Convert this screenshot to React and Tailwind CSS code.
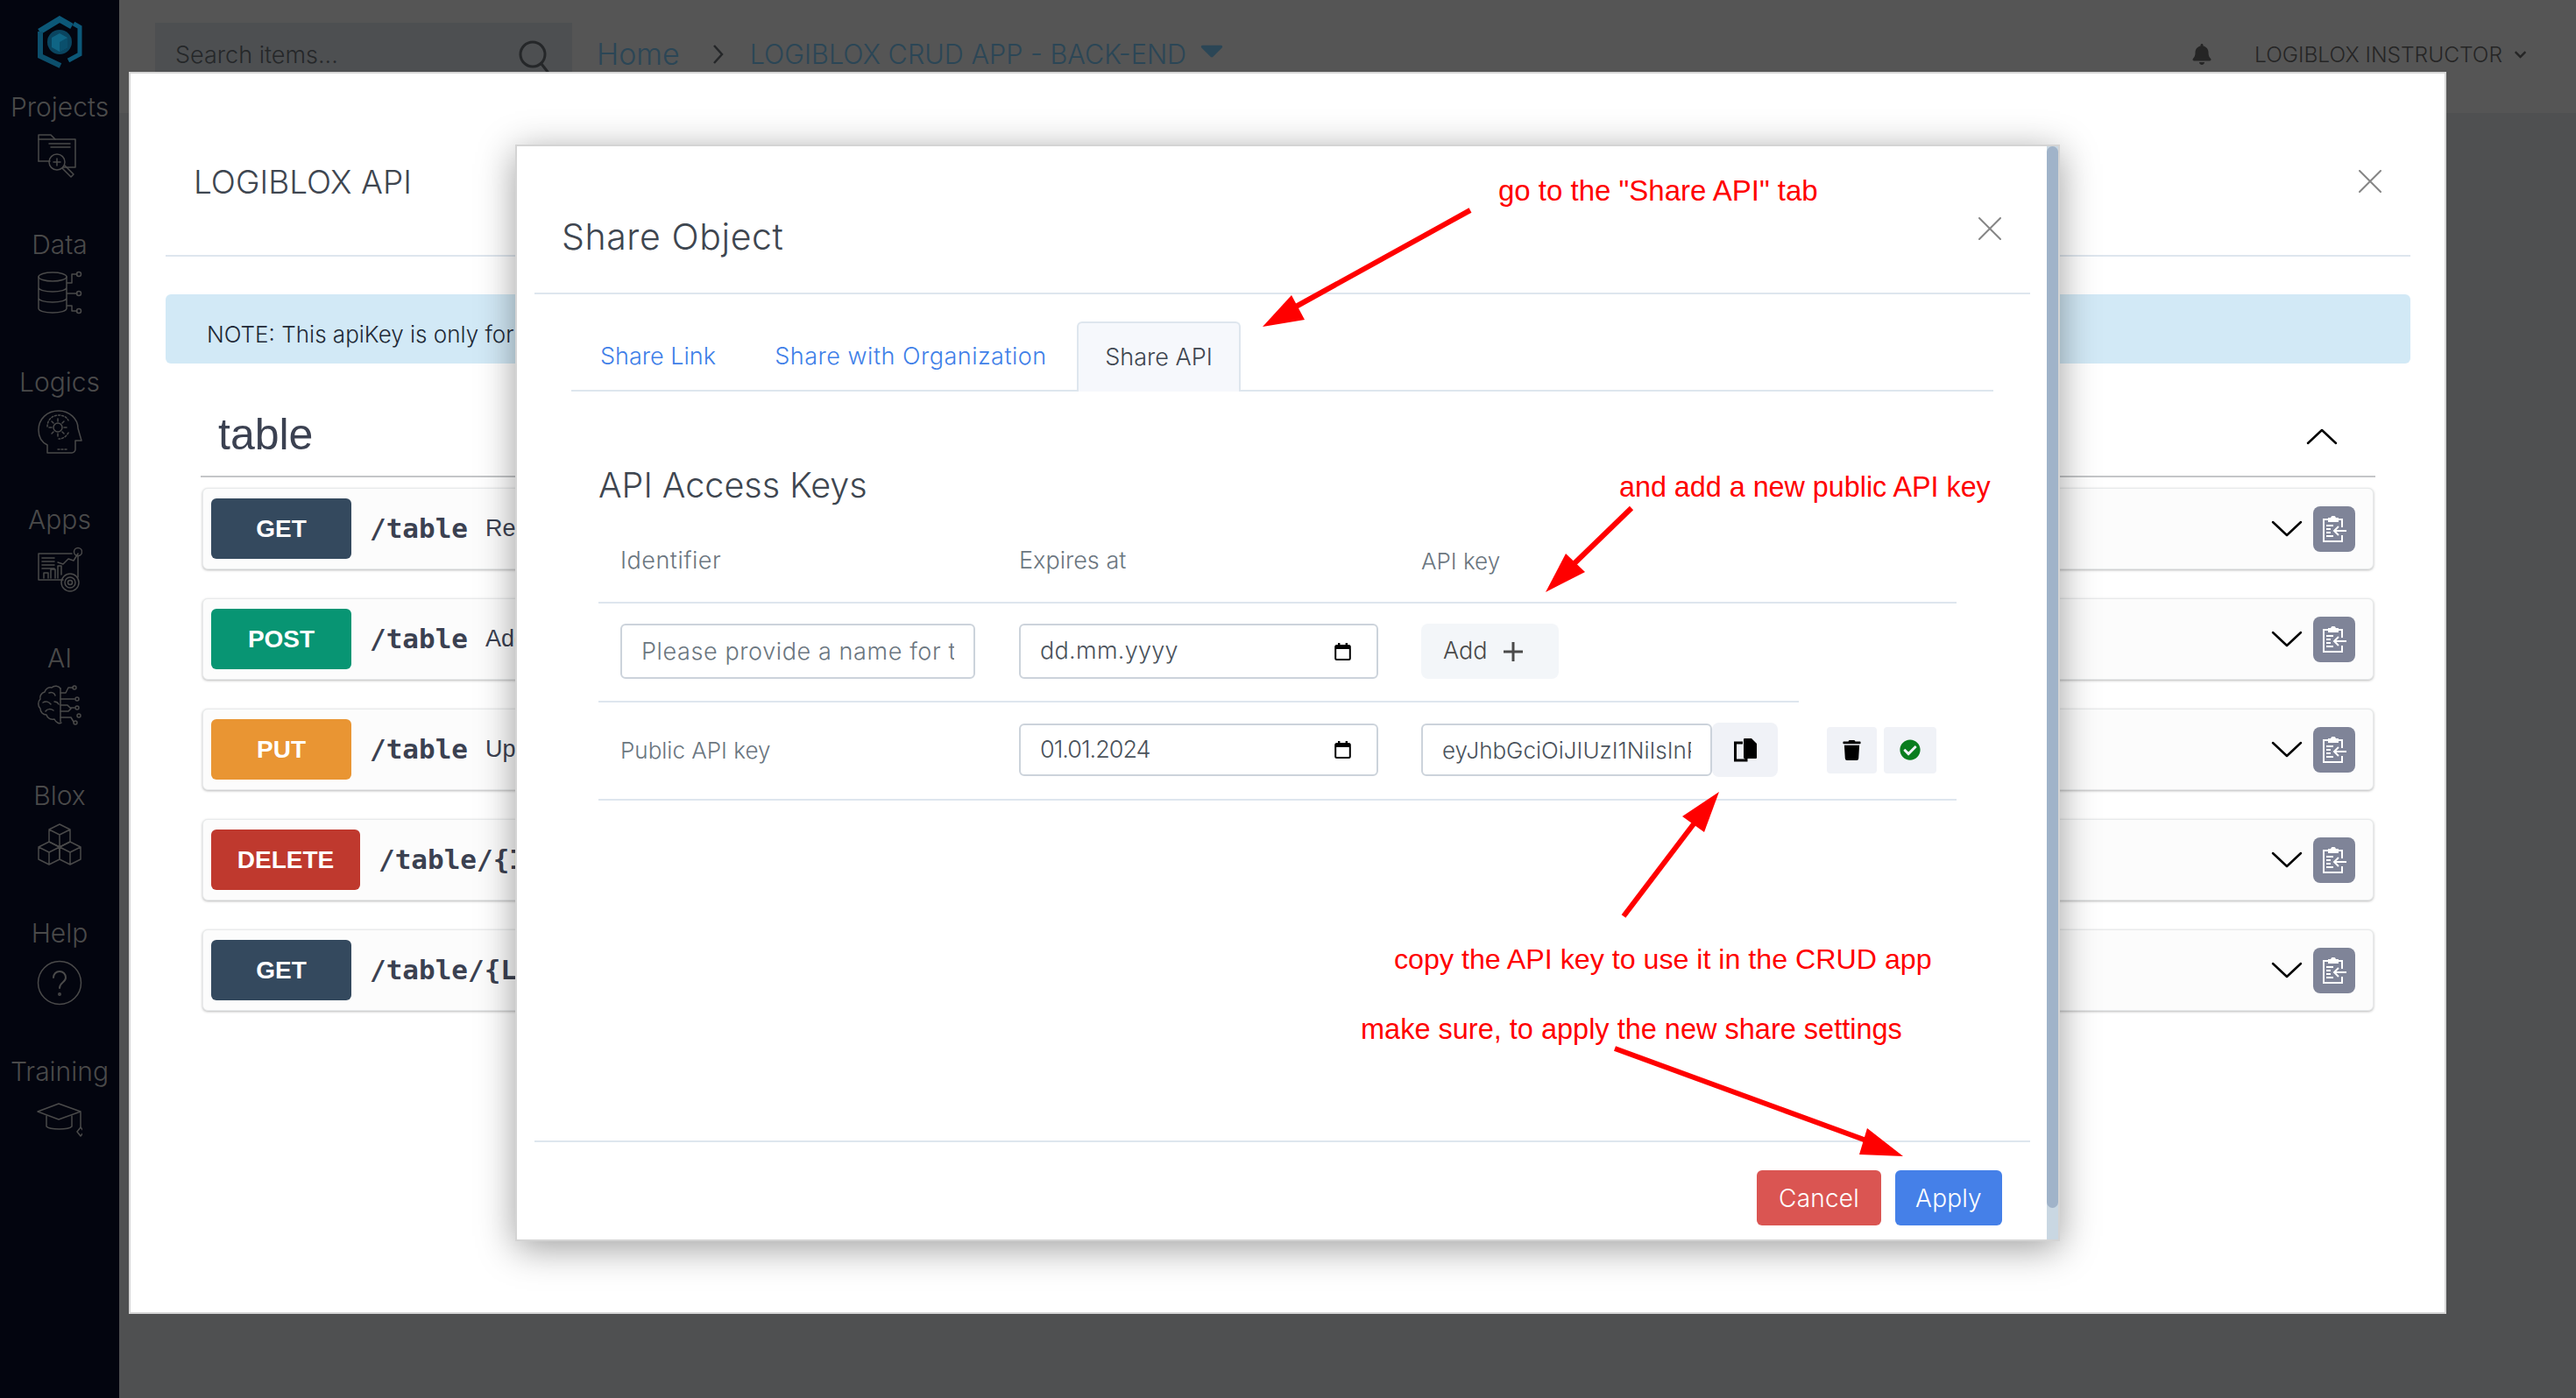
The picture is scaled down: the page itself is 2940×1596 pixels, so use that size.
import React from "react";
import { FaBell, FaChevronDown, FaTrash, FaCheckCircle, FaCaretDown } from "react-icons/fa";

const I = ({ children, w = 52, h = 52, vb = "0 0 52 52" }) => (
  <svg width={w} height={h} viewBox={vb} fill="none" stroke="#4a4a4a" strokeWidth="1.5" strokeLinecap="round" strokeLinejoin="round">{children}</svg>
);

const ProjectsIcon = () => (
  <I><path d="M2 32V2h14l5 5h23v32H30" /><path d="M2 7h19M2 32h13M14 12h24M16 16h22" /><circle cx="23" cy="33" r="9" /><path d="M23 29v8M19 33h8M29 40l10 10 3-3-10-10" /></I>
);
const DataIcon = () => (
  <I><ellipse cx="18" cy="7" rx="16" ry="5" /><path d="M2 7v36c0 3 7 5 16 5s16-2 16-5V7M2 19c0 3 7 5 16 5s16-2 16-5M2 31c0 3 7 5 16 5s16-2 16-5M34 26h12M34 14h6V4h6M34 40h6v6h6" /><circle cx="48" cy="4" r="2.5" /><circle cx="48" cy="26" r="2.5" /><circle cx="48" cy="46" r="2.5" /></I>
);
const LogicsIcon = () => (
  <I><path d="M12 50V41C6 38 2 32 2 24 2 11 12 2 25 2c12 0 22 9 22 20l4 14h-7v10c0 2-2 4-4 4H12z" /><circle cx="24" cy="21" r="5" /><path d="M24 11v3M24 28v3M14 21h3M31 21h3M17 14l2 2M29 26l2 2M31 14l-2 2M17 28l2-2" /><path d="M12 20c0-7 5-13 13-13 5 0 9 2 11 6M36 27c-2 4-6 7-11 7M24 46h10" strokeDasharray="2 2" /></I>
);
const AppsIcon = () => (
  <I><path d="M30 38H2V8h38" /><path d="M6 13h14M6 17h14M6 21h14M6 25h14M8 36v-6h5v6M16 36V26h5v10M24 36V22h4v10" /><path d="M24 18l6 2 6-6 6 2 5-8" /><circle cx="47" cy="6" r="4.5" /><path d="M47 11v24" /><circle cx="38" cy="41" r="10" /><circle cx="38" cy="41" r="6" /><circle cx="38" cy="41" r="2.5" /></I>
);
const AiIcon = () => (
  <I><path d="M27 5c-2-3-7-4-10-1-3-1-7 1-8 5-4 1-6 5-5 8-3 3-3 8 0 11 0 4 3 7 7 7 1 4 5 6 9 5 2 4 6 6 8 4" /><path d="M27 5v38" /><path d="M14 10c3-1 6 0 7 3M7 21c3-2 7-1 9 2M10 31c2-3 6-3 9-1M20 20c2 0 4 1 5 3" /><path d="M27 10h6l3-6h5M27 17h16M27 24h8l3 3h5M27 31h9l3-3M27 38h12l3 5" /><circle cx="43" cy="4" r="2" /><circle cx="46" cy="17" r="2" /><circle cx="46" cy="27" r="2" /><circle cx="44" cy="44" r="2" /><circle cx="48" cy="36" r="2" /></I>
);
const BloxIcon = () => (
  <I><path d="M26 3l12 6v14l-12 6-12-6V9zM14 9l12 6 12-6M26 15v14" /><path d="M14 23l12 6v14l-12 6-12-6V29zM2 29l12 6 12-6M14 35v14" /><path d="M38 23l12 6v14l-12 6-12-6V29zM26 29l12 6 12-6M38 35v14" /></I>
);
const HelpIcon = () => (
  <I><circle cx="26" cy="26" r="24.5" /><path d="M19 20c0-4 3-7 7-7s7 3 7 7c0 6-7 5-7 12" strokeWidth="2" /><circle cx="26" cy="39" r="1.2" /></I>
);
const TrainingIcon = () => (
  <I h={44} vb="0 0 52 44"><path d="M1 12L25 3l25 9-25 9z" /><path d="M11 17v12c4 4 25 4 29 0V17M50 13v17" /><path d="M50 30l-4 5 4 5 4-5z" /></I>
);

const Logo = () => (
  <svg width="52" height="60" viewBox="0 0 52 60" fill="none">
    <path d="M3 18L26 4l14 8" stroke="#0c5878" strokeWidth="7" />
    <path d="M42 9l7 4v31l-13 7" stroke="#0c5878" strokeWidth="5" />
    <path d="M4 18v28l23 11" stroke="#0c4f6c" strokeWidth="6" />
    <circle cx="26" cy="30" r="14" fill="#0a4560" />
    <path d="M26 20l9 5v11l-9 5-9-5V25z" fill="#0f6585" />
    <path d="M26 30l9-5v11l-9 5z" fill="#0a4f6c" />
  </svg>
);

const nav = [
  ["Projects", ProjectsIcon],
  ["Data", DataIcon],
  ["Logics", LogicsIcon],
  ["Apps", AppsIcon],
  ["AI", AiIcon],
  ["Blox", BloxIcon],
  ["Help", HelpIcon],
  ["Training", TrainingIcon],
];

const CloseX = ({ size = 26 }) => (
  <svg width={size} height={size} viewBox="0 0 26 26" stroke="#858585" strokeWidth="2" strokeLinecap="round"><path d="M1 1l24 24M25 1L1 25" /></svg>
);

const Chevron = ({ up }) => (
  <svg width="36" height="20" viewBox="0 0 36 20" fill="none" stroke="#000" strokeWidth="2.5" strokeLinecap="round" strokeLinejoin="round">
    <path d={up ? "M2 18L18 3l16 15" : "M2 2l16 15L34 2"} />
  </svg>
);

const ClipIcon = () => (
  <svg width="28" height="30" viewBox="0 0 28 30" fill="none" stroke="#fff" strokeWidth="2">
    <path d="M8 4H2v25h21v-7M23 13V4h-6" />
    <path d="M8 6V3h3c0-3 4-3 4 0h3v3z" fill="#fff" />
    <path d="M5 11h8M5 15h5M5 19h5M5 23h8" />
    <path d="M28 17H14M19 12l-5 5 5 5" />
  </svg>
);

const Calendar = () => (
  <svg width="19" height="20" viewBox="0 0 19 20" fill="none">
    <rect x="1.2" y="3" width="16.6" height="16" rx="1.5" stroke="#000" strokeWidth="2" />
    <rect x="1" y="3" width="17" height="4" fill="#000" />
    <rect x="4" y="0" width="2.4" height="4" fill="#000" />
    <rect x="12.6" y="0" width="2.4" height="4" fill="#000" />
  </svg>
);

const CopyIcon = () => (
  <svg width="28" height="28" viewBox="0 0 28 28" fill="none">
    <path d="M11 6H2.5v20H15v-3" stroke="#000" strokeWidth="3" />
    <path d="M13 1h8l6 6v16a1 1 0 01-1 1H13a1 1 0 01-1-1V2a1 1 0 011-1z" fill="#000" />
  </svg>
);

const ops = [
  ["GET", "bg-[#34495e]", "w-[160px]", "/table", "Read all table records", "w-[188px]"],
  ["POST", "bg-[#089573]", "w-[160px]", "/table", "Add a new table record", "w-[188px]"],
  ["PUT", "bg-[#e99533]", "w-[160px]", "/table", "Update a table record", "w-[188px]"],
  ["DELETE", "bg-[#bf392e]", "w-[170px]", "/table/{ID}", "Delete a table record", "w-[178px]"],
  ["GET", "bg-[#34495e]", "w-[160px]", "/table/{LOOKUP}", "Read a table record", "w-[188px]"],
];

const Op = ({ m, color, width, path, desc, clip }) => (
  <div className="h-[93px] flex items-center pl-[9px] pr-[20px] bg-[#fcfcfc] rounded-[6px] border border-[#e8eaeb] shadow-[0_1px_3px_rgba(0,0,0,0.28)]">
    <div className={`${width} ${color} h-[69px] rounded-[6px] flex items-center justify-center text-white font-bold text-[28px] [font-family:'Liberation_Sans',sans-serif]`}>{m}</div>
    <div className={`${clip} pl-[21px] flex items-center overflow-hidden whitespace-nowrap`}>
      <div className="text-[31px] font-bold text-[#3b4151] [font-family:'DejaVu_Sans_Mono',monospace]">{path}</div>
      <div className="ml-[20px] text-[27px] text-[#3b4151] [font-family:'Liberation_Sans',sans-serif]">{desc}</div>
    </div>
    <div className="ml-auto flex items-center">
      <Chevron />
      <div className="ml-[12px] w-[48px] h-[52px] rounded-[8px] bg-[#7f8498] flex items-center justify-center"><ClipIcon /></div>
    </div>
  </div>
);

const inputBox = "h-full border-2 border-[#ccd3db] rounded-[6px] bg-white px-[22px] text-[27px] text-[#4a525b] outline-none";

const DateField = ({ text, track }) => (
  <div className={`${inputBox} w-[410px] flex items-center justify-between pr-[29px]`}>
    <span className={track}>{text}</span>
    <Calendar />
  </div>
);

const Note = ({ className, children }) => (
  <span className={`absolute whitespace-nowrap text-[#ff0000] leading-none [font-family:'Liberation_Sans',sans-serif] ${className}`}>{children}</span>
);

const Arrow = ({ x1, y1, x2, y2, head }) => (
  <>
    <line x1={x1} y1={y1} x2={x2} y2={y2} stroke="#ff0000" strokeWidth="6" />
    <polygon points={head} fill="#ff0000" />
  </>
);

export default function App() {
  return (
    <div className="relative w-[2940px] h-[1596px] overflow-hidden flex bg-[#4f5051] [font-family:Inter,sans-serif] font-light">
      <aside className="w-[136px] h-full shrink-0 bg-[#03050f] flex flex-col items-center">
        <div className="h-[95px] pt-[18px] flex justify-center"><Logo /></div>
        {nav.map(([label, Icon]) => (
          <div key={label} className="h-[157.3px] shrink-0 flex flex-col items-center">
            <div className="h-[54px] flex items-center text-[30px] text-[#4a4a4a]">{label}</div>
            <div className="mt-[3px] h-[52px] flex items-center justify-center"><Icon /></div>
          </div>
        ))}
      </aside>

      <div className="flex-1 flex flex-col">
        <header className="h-[129px] bg-[#555555] flex items-start text-[#252729]">
          <div className="ml-[41px] mt-[26px] w-[476px] h-[103px] bg-[#4d4f51] flex items-start justify-between pl-[23px] pr-[25px] pt-[21px]">
            <span className="text-[27px] leading-[32px] font-light">Search items...</span>
            <svg width="36" height="38" viewBox="0 0 36 38" fill="none" stroke="#252729" strokeWidth="3" strokeLinecap="round" className="mt-[-1px]"><circle cx="16" cy="16" r="14" /><path d="M26 27l7 9" /></svg>
          </div>
          <div className="ml-[28px] mt-[44px] flex items-center leading-[36px] text-[#2b4656]">
            <span className="text-[34px]">Home</span>
            <svg width="14" height="24" viewBox="0 0 14 24" fill="none" stroke="#252729" strokeWidth="2.5" className="ml-[37px] mr-[29px]"><path d="M2 2l9 10-9 10" /></svg>
            <span className="text-[30.6px]">LOGIBLOX CRUD APP - BACK-END</span>
            <FaCaretDown className="ml-[8px] mt-[-10px] text-[#2b4656]" size={42} />
          </div>
          <div className="ml-auto mt-[44px] mr-[56px] flex items-center text-[#252525]">
            <FaBell size={24} />
            <span className="ml-[48px] text-[24.5px] leading-[36px]">LOGIBLOX INSTRUCTOR</span>
            <FaChevronDown size={15} className="ml-[13px]" />
          </div>
        </header>
      </div>

      {/* Outer modal */}
      <div className="absolute left-[147px] top-[82px] w-[2645px] h-[1418px] bg-white border-2 border-[#d6d6d6]">
        <div className="pl-[40px] pr-[39px]">
          <div className="h-[209px] pt-[42px] flex items-center justify-between border-b-2 border-[#dee6ee] pl-[32px] pr-[33px] pb-[1px]">
            <h2 className="text-[37px] text-[#3e4650]">LOGIBLOX API</h2>
            <div className="mt-[-2px]"><CloseX /></div>
          </div>
          <div className="mt-[43px] h-[79px] rounded-[6px] bg-[#d2e9f6] flex items-center pl-[47px] pt-[12px] text-[26px] text-[#1f2937]">
            <span className="w-[351px] overflow-hidden whitespace-nowrap">NOTE: This apiKey is only for testing purposes.</span>
          </div>
          <div className="mx-[40px]">
            <div className="h-[130px] pt-[34px] flex items-center justify-between border-b-2 border-[#c4c6c8] pl-[20px] pr-[43px]">
              <span className="text-[50px] text-[#3b4151] font-normal [font-family:'Liberation_Sans',sans-serif]">table</span>
              <div className="mt-[4px]"><Chevron up /></div>
            </div>
            <div className="mt-[12px] mx-[2px] flex flex-col gap-[33px]">
              {ops.map((o, i) => (
                <Op key={i} m={o[0]} color={o[1]} width={o[2]} path={o[3]} desc={o[4]} clip={o[5]} />
              ))}
            </div>
          </div>
        </div>

        {/* Inner modal */}
        <div className="absolute left-[439px] top-[81px] w-[1763px] h-[1252px] bg-white border-2 border-[#d4d4d4] flex shadow-[0_8px_40px_rgba(0,0,0,0.38)]">
          <div className="flex-1 flex flex-col pl-[20px] pr-[19px]">
            <div className="h-[169px] pt-[41px] flex items-center justify-between border-b-2 border-[#dee6ee] pl-[31px] pr-[33px]">
              <h3 className="text-[41px] tracking-[0.6px] text-[#3e4650]">Share Object</h3>
              <div className="mt-[-21px]"><CloseX /></div>
            </div>
            <div className="mx-[42px] mt-[31px] h-[80px] flex items-end border-b-2 border-[#dee6ee] text-[27px] text-[#3f7fe8]">
              <div className="w-[198px] h-[78px] pt-[2px] flex items-center justify-center">Share Link</div>
              <div className="w-[379px] h-[78px] pt-[2px] flex items-center justify-center tracking-[0.5px]">Share with Organization</div>
              <div className="w-[187px] h-[80px] mb-[-2px] flex items-center justify-center bg-[#f6f8fc] border-2 border-b-0 border-[#dee6ee] rounded-t-[6px] text-[#3e4650]">Share API</div>
            </div>
            <div className="flex-1 ml-[73px] mr-[84px]">
              <div className="mt-[85px] h-[44px] leading-[44px] text-[39.5px] text-[#3e4650]">API Access Keys</div>
              <div className="h-[113px] pt-[18px] flex items-center border-b-2 border-[#dee6ee] pl-[25px] text-[#6b7680]">
                <div className="w-[455px] text-[27px] tracking-[0.5px]">Identifier</div>
                <div className="w-[459px] text-[27px]">Expires at</div>
                <div className="text-[26px]">API key</div>
              </div>
              <div className="h-[111px] pt-[23px] pb-[25px] flex pl-[25px]">
                <div className="w-[455px] h-full">
                  <input readOnly placeholder="Please provide a name for the new API key" className={`${inputBox} w-[405px] tracking-[0.6px] placeholder:text-[#6b7680]`} />
                </div>
                <div className="w-[459px] h-full"><DateField text="dd.mm.yyyy" track="tracking-[0.3px]" /></div>
                <div className="w-[157px] h-full rounded-[8px] bg-[#f3f6f9] flex items-center justify-start pl-[25px] gap-[18px] text-[27px] text-[#4a4a4a]">
                  <span>Add</span>
                  <svg width="22" height="22" viewBox="0 0 22 22" stroke="#4a4a4a" strokeWidth="3"><path d="M11 0v22M0 11h22" /></svg>
                </div>
              </div>
              <div className="w-[1370px] h-[2px] bg-[#dee6ee]" />
              <div className="h-[112px] flex items-center border-b-2 border-[#dee6ee] pl-[25px] pb-[2px]">
                <div className="w-[455px] text-[26px] text-[#6b7680]">Public API key</div>
                <div className="w-[459px] h-[60px]"><DateField text="01.01.2024" track="tracking-[-1px]" /></div>
                <div className="h-[60px] flex items-center">
                  <input readOnly value="eyJhbGciOiJIUzI1NiIsInR5cCI6IkpXVCJ9" className={`${inputBox} w-[332px] !text-[26px]`} />
                  <div className="w-[75px] h-[62px] rounded-[8px] bg-[#f0f2f7] flex items-center justify-center"><CopyIcon /></div>
                  <div className="ml-[56px] w-[57px] h-[53px] rounded-[4px] bg-[#f0f2f7] flex items-center justify-center"><FaTrash size={23} color="#000" /></div>
                  <div className="ml-[8px] w-[60px] h-[53px] rounded-[4px] bg-[#f0f2f7] flex items-center justify-center"><FaCheckCircle size={24} color="#0a7d1f" /></div>
                </div>
              </div>
            </div>
            <div className="h-[113px] pt-[32px] border-t-2 border-[#dee6ee] flex justify-end gap-[16px] pr-[32px]">
              <button className="w-[142px] h-[63px] rounded-[6px] bg-[#da5552] text-white text-[28px] tracking-[0.2px] font-light">Cancel</button>
              <button className="w-[122px] h-[63px] rounded-[6px] bg-[#4580e8] text-white text-[28px] tracking-[0.2px] font-light">Apply</button>
            </div>
          </div>
          <div className="w-[13px] h-full bg-[#c9d7e2]">
            <div className="w-full h-[1212px] rounded-full bg-[#a0b3c9]" />
          </div>
        </div>
      </div>

      {/* Annotations */}
      <svg className="absolute left-0 top-0 pointer-events-none" width="2940" height="1596">
        <Arrow x1={1678} y1={240} x2={1470} y2={355} head="1441,373 1474,337 1489,365" />
        <Arrow x1={1862} y1={580} x2={1795} y2={645} head="1764,676 1787,632 1809,653" />
        <Arrow x1={1853} y1={1046} x2={1935} y2={938} head="1962,904 1920,932 1945,950" />
        <Arrow x1={1843} y1={1197} x2={2130} y2={1302} head="2172,1320 2131,1288 2122,1318" />
      </svg>
      <Note className="left-[1710px] top-[201px] text-[33px]">go to the "Share API" tab</Note>
      <Note className="left-[1848px] top-[540px] text-[32.3px]">and add a new public API key</Note>
      <Note className="left-[1591px] top-[1079px] text-[32.2px]">copy the API key to use it in the CRUD app</Note>
      <Note className="left-[1553px] top-[1159px] text-[32.5px]">make sure, to apply the new share settings</Note>
    </div>
  );
}
